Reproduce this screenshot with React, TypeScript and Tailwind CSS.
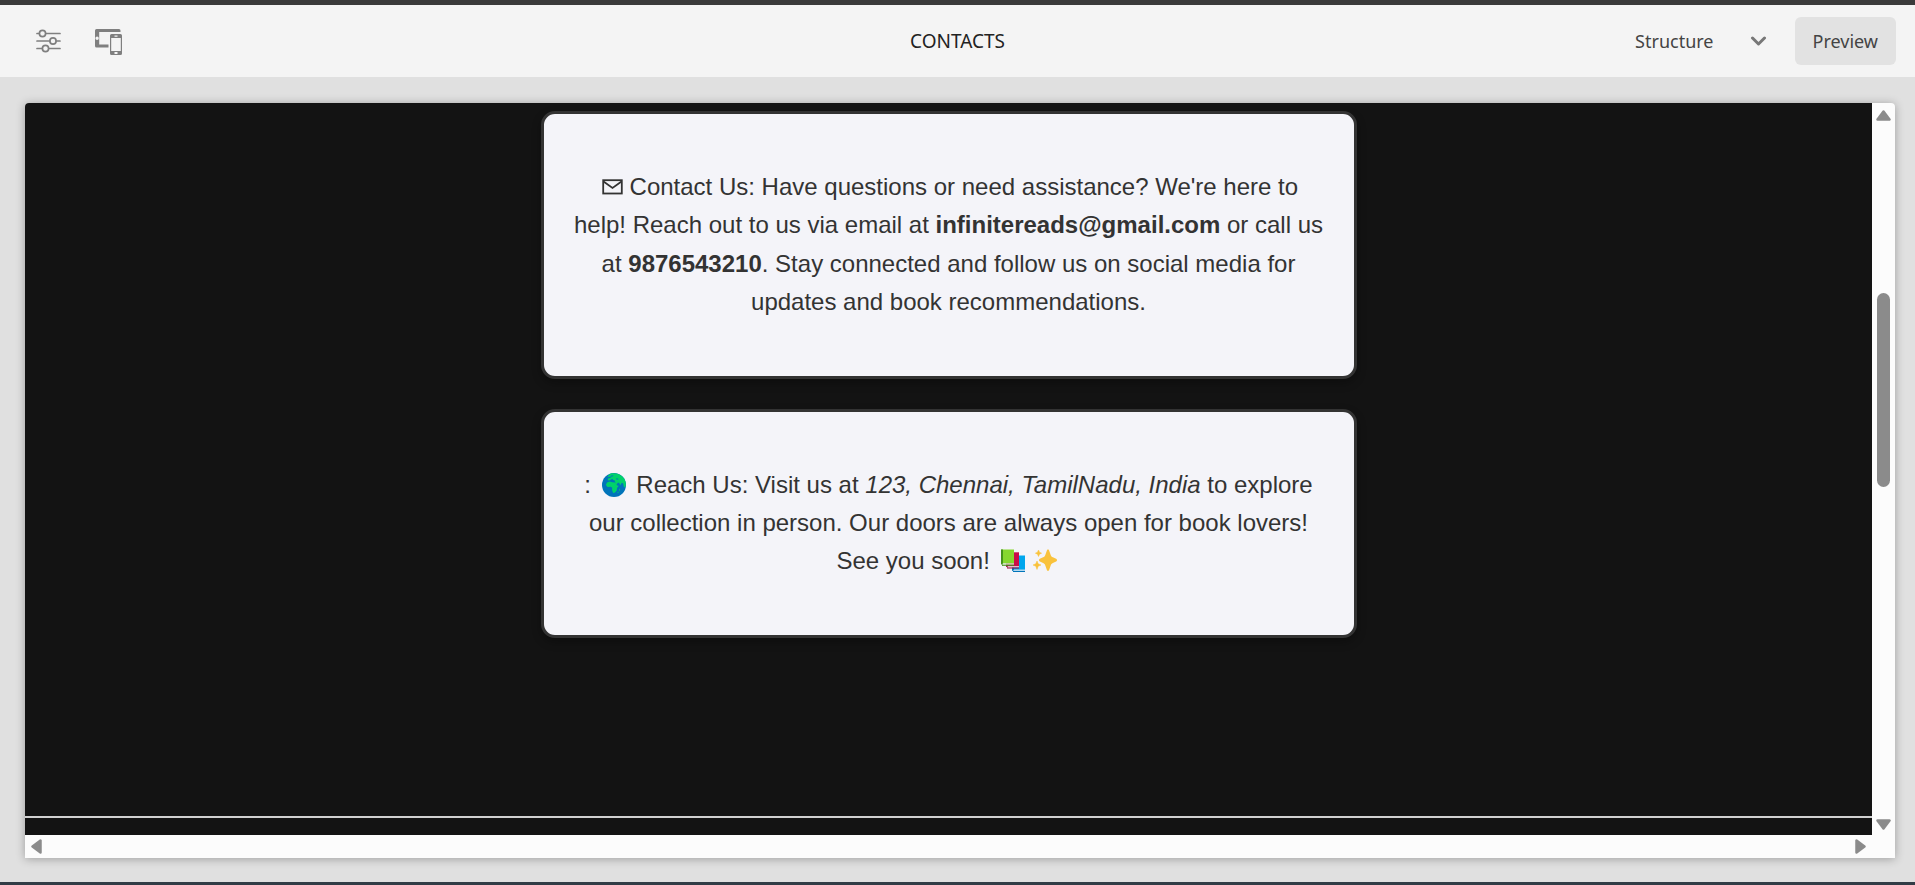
import React from "react";

const EDITOR_ICON = "#7f7f7f";

function SlidersIcon() {
  return (
    <svg width="26" height="26" viewBox="0 0 26 26" fill="none" stroke={EDITOR_ICON} strokeWidth="1.700" strokeLinecap="round" aria-hidden="true">
      <path d="M2 5.500h2M11 5.500h14M2 13h12.500M21.500 13h3.500M2 20.500h5M14 20.500h11" />
      <circle cx="7.500" cy="5.500" r="3.100" />
      <circle cx="18" cy="13" r="3.100" />
      <circle cx="10.500" cy="20.500" r="3.100" />
    </svg>
  );
}

function DevicesIcon() {
  return (
    <svg width="28" height="28" viewBox="0 0 28 28" aria-hidden="true">
      <path
        fill={EDITOR_ICON}
        fillRule="evenodd"
        d="M2.500 2h22.500a1.500 1.500 0 0 1 1.500 1.500V5H5.200v12.500H14.500V20.500H2.500A1.500 1.500 0 0 1 1 19V3.500A1.500 1.500 0 0 1 2.500 2ZM3.100 9.600a1.700 1.700 0 1 0 0 3.400 1.700 1.700 0 0 0 0-3.400Z"
      />
      <path
        fill={EDITOR_ICON}
        fillRule="evenodd"
        d="M17.500 7h9A1.500 1.500 0 0 1 28 8.500v18a1.500 1.500 0 0 1-1.500 1.500h-9a1.500 1.500 0 0 1-1.500-1.500v-18A1.500 1.500 0 0 1 17.500 7Zm-.3 4v13h9.600V11Zm3.300-2.500v1.300h3V8.500Zm0 16.500v2h3v-2Z"
      />
    </svg>
  );
}

function EnvelopeIcon() {
  return (
    <svg className="ml-[3px] inline-block align-baseline" width="21" height="16" viewBox="0 0 21 16" fill="none" stroke="#333333" strokeWidth="1.800" role="img" aria-label="Envelope">
      <rect x="1.200" y="1.200" width="18.600" height="13.300" />
      <path d="M1.500 2.500l9 6.500 9-6.500" />
    </svg>
  );
}

function GlobeIcon() {
  return (
    <svg className="mx-1 inline-block align-[-4px]" width="24" height="24" viewBox="0 0 24 24" role="img" aria-label="Globe">
      <circle cx="12" cy="12" r="12" fill="#0074ba" />
      <path
        fill="#00d26a"
        d="M8 .7C14.500-1.200 22 2.500 23.600 8.800l.3 3.500-1 2.200-1-.7-.8-3.600-1.300-.4-1.600 2.400-1.100-2.500-1.300.1-1.300 2-1.300-2.600-.4-1.600-1.600-.5-1-1.300-2.200 1.400L6 7.400l-.2-1.900 2.400-.5 1.300-1.400-2.300.2-1.800.2 1-1.600Z"
      />
      <path fill="#00d26a" d="M5 9.600l2.800-1 2.400.6 3.200.3 1.700 2.900 1.700.3-1.800 2.300-.3 2.600-1.700 2-1.900.3-1-2.900.1-2.300-1.400-.9-3.200.2-1.700-2Z" />
      <path fill="#0074ba" d="M8.500 2.800l2.500-.6.500.8-2 .8ZM14 5.400l2.200.1.200.9-2 .1Z" />
      <path fill="#00d26a" d="M17.200 16.500l.8-1 .1 2-.7.8ZM15.500 19l1-.4.2.8-.9.500Z" />
    </svg>
  );
}

function BooksIcon() {
  return (
    <svg className="mx-1 inline-block align-[-4px]" width="24" height="24" viewBox="0 0 24 24" role="img" aria-label="Books">
      <path fill="#00a6ed" d="M11 6.500h13V21H11Z" />
      <path fill="#0074ba" d="M11 6.500h2V23l-2-1.500Z" />
      <path fill="#b4d8ee" d="M13 20.500h11V22H12Z" />
      <path fill="#0074ba" d="M12 22h12v1H12Z" />
      <path fill="#ca0b4a" d="M5 3.300h13v14H5Z" />
      <path fill="#990838" d="M5 3.300h2V19l-2-1.500Z" />
      <path fill="#e7b8ca" d="M7 17h11v1.500H6Z" />
      <path fill="#990838" d="M6 18.500h12v1H6Z" />
      <path fill="#86d72f" d="M0 .5h13v14H0Z" />
      <path fill="#44911b" d="M0 .5h2v16.200L0 15Z" />
      <path fill="#cfe3c0" d="M2 14.300h11v1.500H1Z" />
      <path fill="#44911b" d="M1 15.800h12v1H1Z" />
    </svg>
  );
}

function SparklesIcon() {
  return (
    <svg className="mx-1 inline-block align-[-4px]" width="24" height="24" viewBox="0 0 24 24" fill="#f9c23c" role="img" aria-label="Sparkles">
      <path d="M15 .5c.7 0 1 .6 1.200 1.200l1.500 4.300c.4 1.200 1 1.800 2.200 2.300l3.200 1.500c.6.300.9.700.9 1.400s-.3 1.100-.9 1.400l-3.200 1.500c-1.200.5-1.800 1.100-2.200 2.300l-1.500 4.300c-.2.600-.5 1.200-1.200 1.200s-1-.6-1.200-1.200l-1.500-4.300c-.4-1.200-1-1.800-2.200-2.300l-3.200-1.500C6.300 12.300 6 11.900 6 11.200s.3-1.100.9-1.400l3.200-1.500c1.200-.5 1.800-1.100 2.200-2.300l1.500-4.300C14 1.100 14.300.5 15 .5Z" />
      <path d="M5.500 1l1 2.200 2.100 1-2.100 1-1 2.300-1-2.300-2.100-1 2.100-1Z" stroke="#f9c23c" strokeWidth=".5" strokeLinejoin="round" />
      <path d="M4 12l1.200 2.800L8 16l-2.800 1.200L4 20.500l-1.200-3.300L0 16l2.800-1.200Z" stroke="#f9c23c" strokeWidth=".5" strokeLinejoin="round" />
    </svg>
  );
}

type Direction = "up" | "down" | "left" | "right";

const ARROWS: Record<Direction, { width: number; height: number; d: string }> = {
  up: { width: 15, height: 11, d: "M7.500 1.500L13.500 9.500H1.500Z" },
  down: { width: 15, height: 11, d: "M7.500 9.500L13.500 1.500H1.500Z" },
  left: { width: 11, height: 15, d: "M1.500 7.500L9.500 1.500V13.500Z" },
  right: { width: 11, height: 15, d: "M9.500 7.500L1.500 1.500V13.500Z" },
};

function ScrollArrow({ direction }: { direction: Direction }) {
  const { width, height, d } = ARROWS[direction];
  return (
    <button type="button" aria-label={`Scroll ${direction}`} className="block shrink-0">
      <svg width={width} height={height} viewBox={`0 0 ${width} ${height}`} fill="#8b8b8b" stroke="#8b8b8b" strokeWidth="2.500" strokeLinejoin="round">
        <path d={d} />
      </svg>
    </button>
  );
}

function Card({ children }: { children: React.ReactNode }) {
  return (
    <section className="w-full max-w-[816px] rounded-[14px] border-[3px] border-[#333333] bg-[#f4f4f9] px-7 py-[54px] text-center text-[24px] leading-[1.6] text-[#333333] shadow-[0_4px_10px_rgba(0,0,0,0.3)]">
      <p>{children}</p>
    </section>
  );
}

export default function App() {
  return (
    <div className="flex min-h-screen flex-col border-t-[5px] border-b-[3px] border-t-[#3a3a3a] border-b-[#323c46] bg-[#e0e0e0]">
      <header className="grid h-[72px] shrink-0 grid-cols-[1fr_auto_1fr] items-center bg-[#f4f4f4] px-[19px] font-['Noto_Sans','Open_Sans',sans-serif] text-[18px] text-[#444444]">
        <div className="flex items-center gap-[33px] pl-4">
          <button type="button" aria-label="Settings">
            <SlidersIcon />
          </button>
          <button type="button" aria-label="Devices">
            <DevicesIcon />
          </button>
        </div>
        <h1 className="text-[19px] text-[#222222]">CONTACTS</h1>
        <div className="flex items-center justify-end">
          <button type="button" className="mr-7 flex items-center gap-9">
            Structure
            <svg width="17" height="11" viewBox="0 0 17 11" fill="none" stroke="#777777" strokeWidth="3" strokeLinecap="round" strokeLinejoin="round" aria-hidden="true">
              <path d="M2.500 2l6 6 6-6" />
            </svg>
          </button>
          <button type="button" className="h-12 rounded-[6px] bg-[#e2e2e2] px-[18px]">
            Preview
          </button>
        </div>
      </header>

      <div className="flex flex-1 flex-col pt-[26px] pr-5 pb-6 pl-[25px]">
        <div className="flex flex-1 flex-col overflow-hidden rounded-t-[4px] bg-[#fcfcfc] shadow-[0_1px_10px_rgba(0,0,0,0.3)]">
          <div className="flex flex-1">
            <main className="flex flex-1 flex-col bg-[#131313] font-['Liberation_Sans',Arial,sans-serif]">
              <div className="flex flex-1 flex-col items-center gap-[30px] border-b-2 border-[#d0d0d0] px-4 pt-2">
                <Card>
                  <EnvelopeIcon /> Contact Us: Have questions or need assistance? We're here to help! Reach out to us via email at{" "}
                  <strong>infinitereads@gmail.com</strong> or call us at <strong>9876543210</strong>. Stay connected and follow us on
                  social media for updates and book recommendations.
                </Card>
                <Card>
                  : <GlobeIcon /> Reach Us: Visit us at <em>123, Chennai, TamilNadu, India</em> to explore our collection in person. Our
                  doors are always open for book lovers! See you soon! <BooksIcon />
                  <SparklesIcon />
                </Card>
              </div>
              <div className="h-[17px]" />
            </main>
            <div className="flex w-[23px] flex-col items-center justify-between pt-[7px] pb-[5px]">
              <ScrollArrow direction="up" />
              <div className="mb-[161px] h-[194px] w-[13px] rounded-full bg-[#8b8b8b]" />
              <ScrollArrow direction="down" />
            </div>
          </div>
          <div className="flex h-[23px] items-center justify-between pr-[29px] pl-[6px]">
            <ScrollArrow direction="left" />
            <ScrollArrow direction="right" />
          </div>
        </div>
      </div>
    </div>
  );
}
